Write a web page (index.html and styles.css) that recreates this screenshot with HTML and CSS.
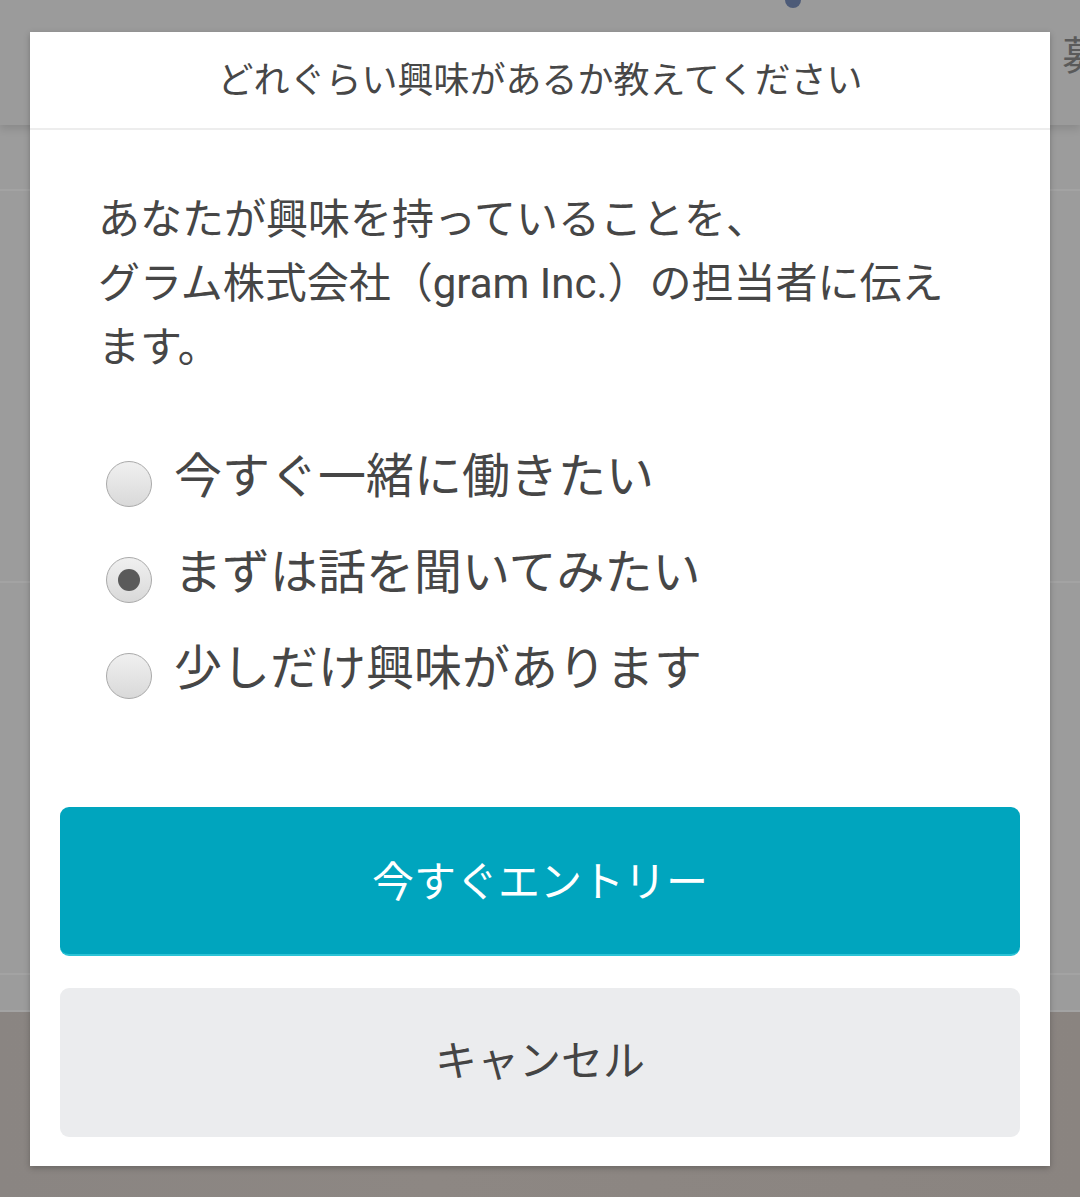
FILE: index.html
```html
<!DOCTYPE html>
<html lang="ja">
<head>
    <meta charset="UTF-8">
    <meta name="viewport" content="width=device-width, initial-scale=1.0">
    <title>エントリー</title>
    <link rel="stylesheet" href="styles.css">
</head>
<body>
    <div class="page">
        <div class="page-header">
            <span class="page-dot"></span>
            <span class="page-side">募</span>
        </div>
        <div class="page-row"></div>
        <div class="page-row tall"></div>
        <div class="page-row tall"></div>
        <div class="page-row short"></div>
        <div class="page-footer"></div>
    </div>

    <div class="modal">
        <div class="modal-header">どれぐらい興味があるか教えてください</div>
        <div class="modal-body">
            <p class="lead">あなたが興味を持っていることを、<br>グラム株式会社（gram Inc.）の担当者に伝えます。</p>
            <form class="choices">
                <label class="choice">
                    <input type="radio" name="level" value="now">
                    <span class="radio"></span>
                    今すぐ一緒に働きたい
                </label>
                <label class="choice">
                    <input type="radio" name="level" value="talk" checked>
                    <span class="radio"></span>
                    まずは話を聞いてみたい
                </label>
                <label class="choice">
                    <input type="radio" name="level" value="little">
                    <span class="radio"></span>
                    少しだけ興味があります
                </label>
            </form>
            <button class="btn btn-entry" type="button">今すぐエントリー</button>
            <button class="btn btn-cancel" type="button">キャンセル</button>
        </div>
    </div>
</body>
</html>
```

FILE: styles.css
```css
html, body {
    margin: 0;
    height: 100%;
}
body {
    font-family: Roboto, "Noto Sans CJK JP", sans-serif;
    background-color: #9c9c9c;
    overflow: hidden;
    position: relative;
}
.page {
    display: flex;
    flex-direction: column;
    height: 100%;
}
.page-header {
    height: 125px;
    background-color: #9b9b9b;
    box-shadow: 0 4px 8px rgba(0, 0, 0, 0.12);
    position: relative;
}
.page-dot {
    position: absolute;
    left: 785px;
    top: -8px;
    width: 16px;
    height: 16px;
    border-radius: 50%;
    background-color: #4d5b78;
}
.page-side {
    position: absolute;
    left: 1062px;
    top: 24px;
    font-size: 40px;
    color: #5a5a5a;
    white-space: nowrap;
}
.page-row {
    height: 64px;
    border-bottom: 2px solid #a3a3a3;
}
.page-row.tall {
    height: 390px;
}
.page-row.short {
    height: 35px;
}
.page-footer {
    flex: 1;
    background: linear-gradient(90deg, #8a8582, #8d8783 40%, #8a8480);
}

.modal {
    position: absolute;
    left: 30px;
    top: 32px;
    width: 1020px;
    height: 1134px;
    background-color: #fff;
    box-shadow: 0 2px 6px rgba(0, 0, 0, 0.25);
    color: #464646;
}
.modal-header {
    height: 90px;
    padding-bottom: 6px;
    border-bottom: 2px solid #ededed;
    display: flex;
    align-items: center;
    justify-content: center;
    font-size: 36px;
    color: #474747;
}
.modal-body {
    padding: 58px 30px 30px;
}
.lead {
    margin: 0 0 44px;
    padding: 0 50px 0 38px;
    font-size: 42px;
    line-height: 64px;
}
.choices {
    padding-left: 46px;
    margin-bottom: 95px;
}
.choice {
    display: flex;
    align-items: center;
    height: 96px;
    font-size: 48px;
    color: #464646;
}
.choice input {
    display: none;
}
.radio {
    width: 44px;
    height: 44px;
    border-radius: 50%;
    border: 1px solid #a9a9a9;
    background: linear-gradient(#f0f0f0, #d9d9d9);
    margin: 24px 22px 0 0;
    position: relative;
    flex: none;
}
.choice input:checked + .radio::after {
    content: "";
    position: absolute;
    left: 11px;
    top: 11px;
    width: 22px;
    height: 22px;
    border-radius: 50%;
    background-color: #5a5a5a;
}
.btn {
    display: block;
    width: 100%;
    height: 149px;
    border: none;
    border-radius: 9px;
    font-family: Roboto, "Noto Sans CJK JP", sans-serif;
    font-size: 42px;
}
.btn-entry {
    background-color: #00a5be;
    color: #fff;
    border-bottom: 2px solid #2cc3d6;
    margin-bottom: 32px;
    padding-bottom: 6px;
}
.btn-cancel {
    background-color: #ebecee;
    color: #444;
    padding-bottom: 12px;
}
```
